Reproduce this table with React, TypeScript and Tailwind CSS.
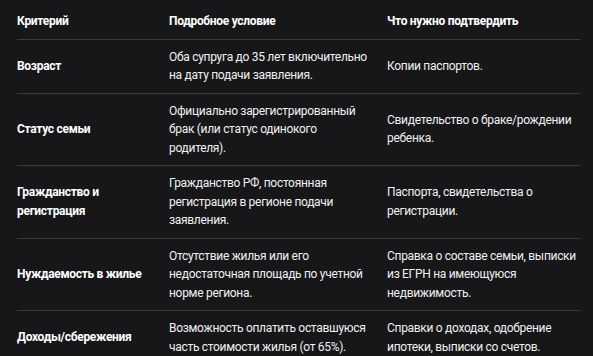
const rows = [
  {
    name: ['Возраст'],
    cond: ['Оба супруга до 35 лет включительно', 'на дату подачи заявления.'],
    docs: ['Копии паспортов.'],
  },
  {
    name: ['Статус семьи'],
    cond: ['Официально зарегистрированный', 'брак (или статус одинокого', 'родителя).'],
    docs: ['Свидетельство о браке/рождении', 'ребенка.'],
  },
  {
    name: ['Гражданство и', 'регистрация'],
    cond: ['Гражданство РФ, постоянная', 'регистрация в регионе подачи', 'заявления.'],
    docs: ['Паспорта, свидетельства о', 'регистрации.'],
  },
  {
    name: ['Нуждаемость в жилье'],
    cond: ['Отсутствие жилья или его', 'недостаточная площадь по учетной', 'норме региона.'],
    docs: ['Справка о составе семьи, выписки', 'из ЕГРН на имеющуюся', 'недвижимость.'],
  },
  {
    name: ['Доходы/сбережения'],
    cond: ['Возможность оплатить оставшуюся', 'часть стоимости жилья (от 65%).'],
    docs: ['Справки о доходах, одобрение', 'ипотеки, выписки со счетов.'],
  },
];

function Lines({ lines }: { lines: string[] }) {
  return (
    <div>
      {lines.map((l, i) => (
        <div key={i} className="whitespace-nowrap">
          {l}
        </div>
      ))}
    </div>
  );
}

export default function App() {
  return (
    <div
      className="w-[593px] h-[356px] overflow-hidden bg-[#171719] pl-[17px] pr-[12px] text-[12px] leading-[18.5px] tracking-[-0.3px] text-[#f0f0f0]"
      style={{ fontFamily: 'Roboto, "Noto Sans", sans-serif' }}
    >
      <div className="grid grid-cols-[152px_218px_194px] font-bold text-white pt-3 pb-2 border-b border-[#3a3a3c]">
        <div>Критерий</div>
        <div>Подробное условие</div>
        <div>Что нужно подтвердить</div>
      </div>
      {rows.map((r, i) => (
        <div
          key={i}
          className="grid grid-cols-[152px_218px_194px] items-center py-2 border-b border-[#3a3a3c]"
        >
          <div className="font-bold text-white">
            <Lines lines={r.name} />
          </div>
          <Lines lines={r.cond} />
          <Lines lines={r.docs} />
        </div>
      ))}
    </div>
  );
}
